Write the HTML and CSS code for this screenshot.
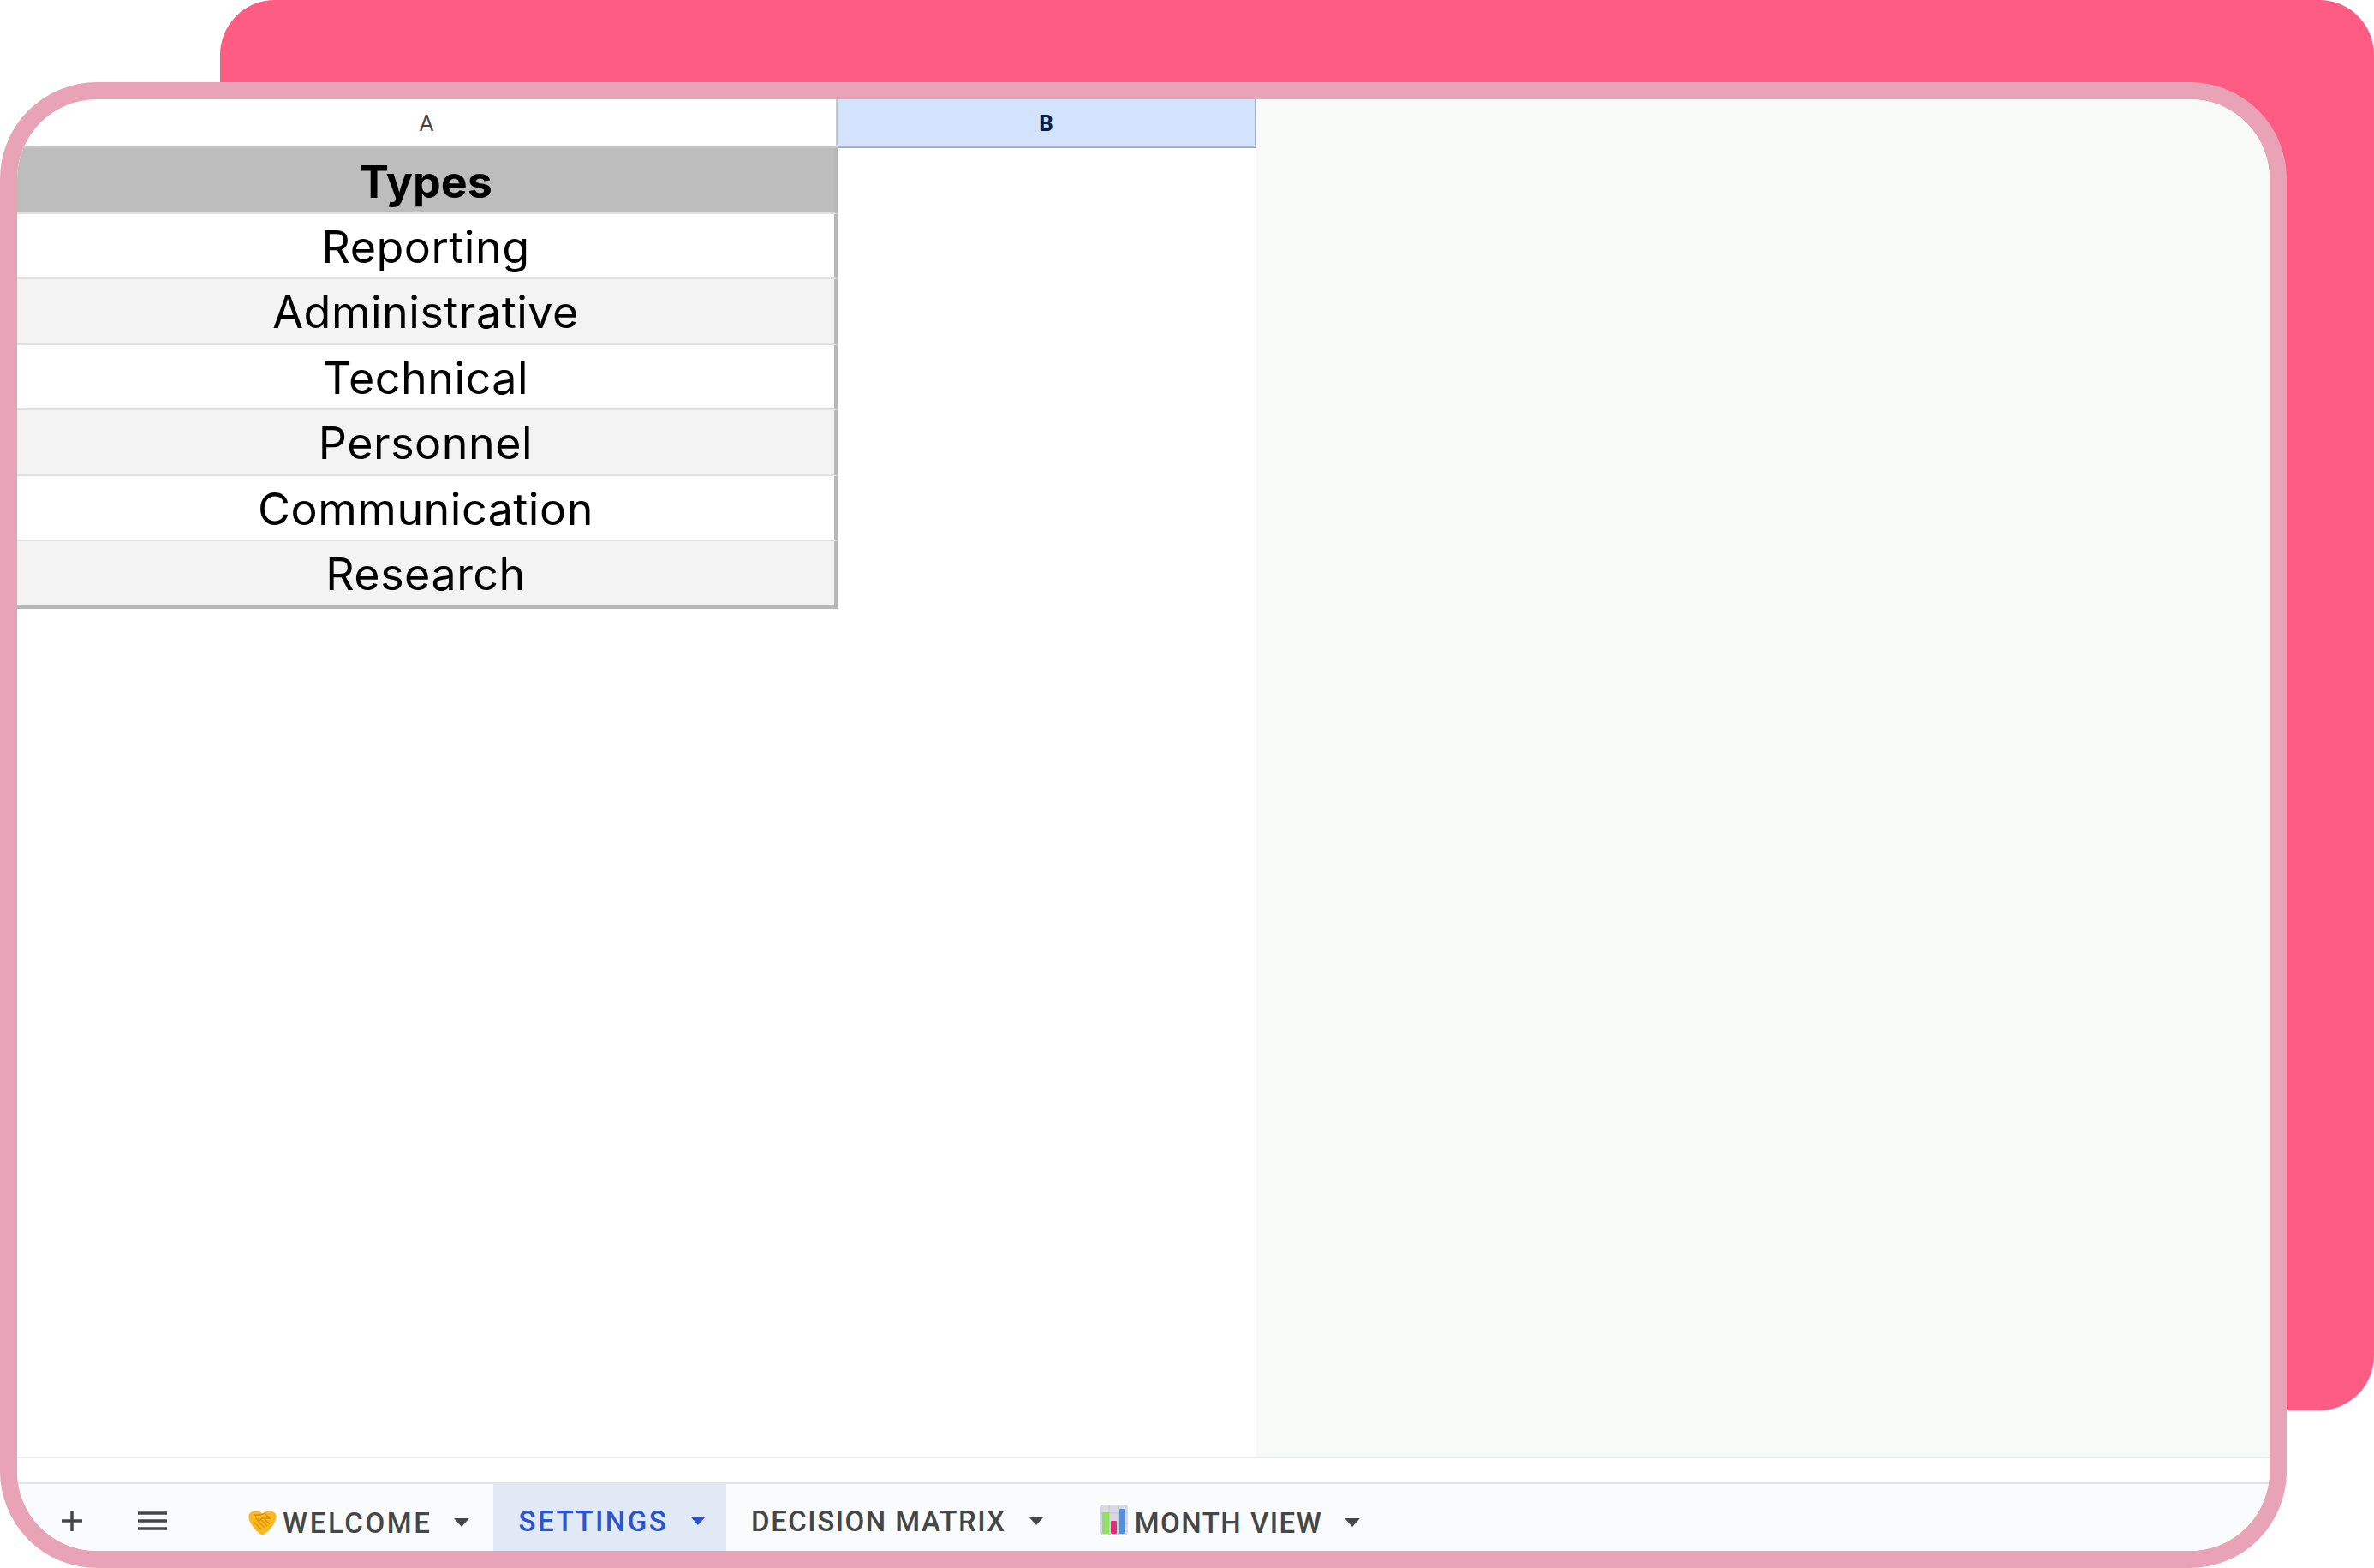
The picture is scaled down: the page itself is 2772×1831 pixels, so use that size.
FILE: index.html
```html
<!DOCTYPE html>
<html lang="en">
<head>
<meta charset="utf-8">
<title>Settings</title>
<link rel="stylesheet" href="styles.css">
</head>
<body>
<div class="stage">
  <div class="backcard"></div>
  <main class="frame">
    <section class="sheet">
      <div class="col col-a">
        <div class="colhead">A</div>
        <div class="cell cell-title">Types</div>
        <div class="cell">Reporting</div>
        <div class="cell cell-alt">Administrative</div>
        <div class="cell">Technical</div>
        <div class="cell cell-alt">Personnel</div>
        <div class="cell">Communication</div>
        <div class="cell cell-alt cell-last">Research</div>
      </div>
      <div class="col col-b">
        <div class="colhead colhead-active">B</div>
      </div>
      <div class="col-rest"></div>
    </section>
    <div class="scrollstrip"></div>
    <nav class="tabbar">
      <svg class="ic-plus" viewBox="0 0 26 26"><path d="M13 1v24M1 13h24" fill="none" stroke="#444746" stroke-width="3.500"/></svg>
      <svg class="ic-menu" viewBox="0 0 34 22"><path d="M0 2h34M0 11h34M0 20h34" fill="none" stroke="#444746" stroke-width="3.500"/></svg>
      <div class="tab tab-low">
        <svg class="emoji-hand" viewBox="0 0 33 29">
          <path d="M16.500 28.500C12 27 5 20 2 13 .5 9.500 0 7.500.5 5.500 1.500 2 5 .5 8.500.5c3.500 0 6 1.200 8 3 2-1.800 4.500-3 8-3s7 1.500 8 5c.5 2 0 4-1.500 7.500-3 7-10 14-14.500 15.500z" fill="#fbb91f"/>
          <path d="M8 5l7 0 4-2 6 6-9 0-3 3-4-3zM6 13l9 9M10 11l9 9M14 10l8 8M19 10l6 6" fill="none" stroke="#e08f0c" stroke-width="1.300"/>
        </svg>
        <span class="tab-label tab-label-welcome">WELCOME</span>
        <i class="caret"></i>
      </div>
      <div class="tab tab-active">
        <span class="tab-label tab-label-settings">SETTINGS</span>
        <i class="caret"></i>
      </div>
      <div class="tab tab-decision">
        <span class="tab-label tab-label-decision">DECISION MATRIX</span>
        <i class="caret"></i>
      </div>
      <div class="tab tab-low tab-month">
        <svg class="emoji-chart" viewBox="0 0 33 36">
          <rect width="33" height="36" rx="4" fill="#d8d8e4"/>
          <path d="M11 0v36M22 0v36M0 10h33M0 22h33" stroke="#c2c2cc" stroke-width="1"/>
          <rect x="3" y="9" width="8" height="25" rx="1" fill="#92de66"/>
          <rect x="13" y="19" width="7" height="15" rx="1" fill="#e0307c"/>
          <rect x="23" y="5" width="7" height="29" rx="1" fill="#4a92e4"/>
        </svg>
        <span class="tab-label tab-label-month">MONTH VIEW</span>
        <i class="caret"></i>
      </div>
    </nav>
  </main>
</div>
</body>
</html>
```
FILE: styles.css
```css
* { box-sizing: border-box; }
html, body { margin: 0; padding: 0; background: #fff; }
.stage { position: relative; width: 2772px; height: 1831px; overflow: hidden; padding-top: 96px; }
.backcard {
  position: absolute; left: 257px; top: 0; width: 2515px; height: 1647px;
  background: #ff5c83; border-radius: 64px;
}
.frame {
  position: relative; width: 2670px; height: 1735px;
  border: 20px solid #e9a3b6; border-radius: 113px;
  background: #fff; overflow: hidden;
  display: flex; flex-direction: column;
}
.sheet { display: flex; height: 1585px; }
.col-a { width: 958px; }
.col-b { width: 489px; }
.col-rest { flex: 1; background: #f8faf7; }
.colhead {
  height: 57px; display: flex; align-items: center; justify-content: center;
  font: 26px "Roboto", sans-serif; color: #444746;
  border-bottom: 2px solid #c7c7c7;
  border-right: 2px solid #c7c7c7;
}
.colhead-active {
  background: #d3e3fd; color: #041e49; font-weight: 700;
  border-bottom: 2px solid #a9b0bc; border-right: 2px solid #a9b0bc;
}
.cell {
  height: 76.500px; display: flex; align-items: center; justify-content: center;
  padding-top: 3px;
  font: 400 52px "Inter", sans-serif; letter-spacing: .5px; color: #000;
  background: #fff;
  border-bottom: 2px solid #e0e0e0;
  border-right: 4px solid #b7b7b7;
}
.cell-alt { background: #f3f3f3; }
.cell-title { background: #bdbdbd; font-weight: 700; letter-spacing: 0; padding-top: 5px; }
.cell-last { border-bottom: 5px solid #b7b7b7; height: 79px; }
.scrollstrip {
  height: 32px; background: #fff;
  border-top: 2px solid #e8eaed; border-bottom: 2px solid #e1e3e7;
}
.tabbar {
  flex: 1; background: #f9fbfd; display: flex; align-items: stretch; padding: 8px 0 0 51px;
}
.ic-plus { width: 26px; height: 26px; align-self: center; margin-right: 64px; }
.ic-menu { width: 34px; height: 22px; align-self: center; margin-right: 67px; }
.tab {
  display: flex; align-items: center; padding: 0 28px;
  color: #444746;
}
.tab-low { padding-top: 4px; }
.tab-active { background: #e1e9f7; color: #2a55cc; padding: 0 24px 0 29px; margin-top: -8px; padding-top: 8px; }
.tab-decision { padding-left: 29px; }
.tab-month { padding-left: 37px; }
.tab-label {
  font: 500 33px "Roboto", sans-serif; white-space: nowrap;
}
.tab-label-welcome { letter-spacing: 2.600px; margin-left: 7px; margin-right: 26px; }
.tab-label-settings { letter-spacing: 2.500px; margin-right: 26px; }
.tab-label-decision { letter-spacing: 1.500px; margin-right: 26px; }
.tab-label-month { letter-spacing: 1.500px; margin-left: 8px; margin-right: 26px; }
.caret {
  width: 0; height: 0; border-left: 9px solid transparent; border-right: 9px solid transparent;
  border-top: 10px solid currentColor;
}
.emoji-hand { width: 33px; height: 29px; }
.emoji-chart { width: 33px; height: 36px; margin-top: -6px; }
```
